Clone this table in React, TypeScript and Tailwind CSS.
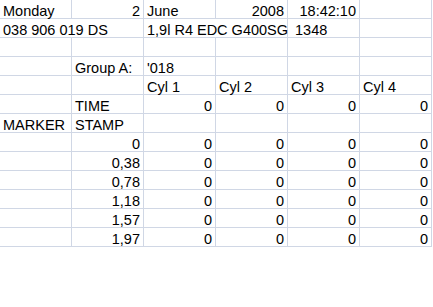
type Cell = { t?: string; r?: boolean; span?: number }

const zeros: Cell[] = [{ t: '0', r: true }, { t: '0', r: true }, { t: '0', r: true }, { t: '0', r: true }]

const rows: Cell[][] = [
    [{ t: 'Monday' }, { t: '2', r: true }, { t: 'June' }, { t: '2008', r: true }, { t: '18:42:10', r: true }, {}],
    [{ t: '038 906 019 DS', span: 2 }, { t: '1,9l R4 EDC G400SG', span: 2 }, { t: ' 1348' }, {}],
    [{}, {}, {}, {}, {}, {}],
    [{}, { t: 'Group A:' }, { t: "'018" }, {}, {}, {}],
    [{}, {}, { t: 'Cyl 1' }, { t: 'Cyl 2' }, { t: 'Cyl 3' }, { t: 'Cyl 4' }],
    [{}, { t: 'TIME' }, ...zeros],
    [{ t: 'MARKER' }, { t: 'STAMP' }, {}, {}, {}, {}],
    ...['0', '0,38', '0,78', '1,18', '1,57', '1,97'].map((v) => [{}, { t: v, r: true }, ...zeros]),
]

function SheetCell({ cell }: { cell: Cell }) {
    const span = cell.span === 2 ? 'col-span-2' : ''
    return (
        <div
            className={`h-[19px] flex items-end border-r border-b border-[#d0d7e5] px-[3px] leading-[14px] whitespace-pre overflow-visible ${span} ${cell.r ? 'justify-end' : 'justify-start'}`}
        >
            {cell.t}
        </div>
    )
}

export default function App() {
    return (
        <div className="w-[433px] h-[307px] bg-white text-black text-[14.5px] font-['Liberation_Sans',Arial,sans-serif]">
            <div className="grid grid-cols-[repeat(6,72px)]">
                {rows.map((row, i) =>
                    row.map((cell, j) => <SheetCell key={`${i}-${j}`} cell={cell} />)
                )}
            </div>
        </div>
    )
}
